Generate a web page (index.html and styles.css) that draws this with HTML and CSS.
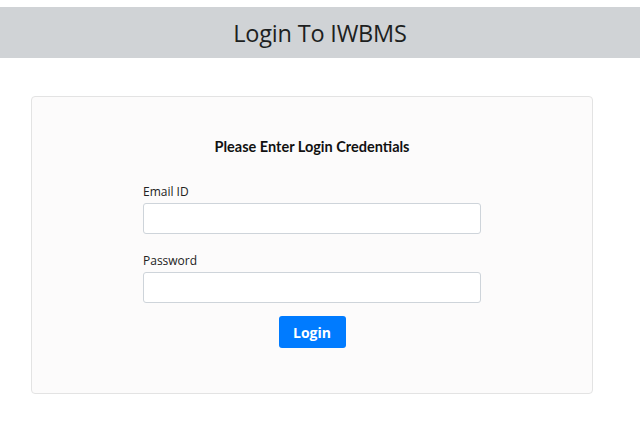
FILE: index.html
```html
<!DOCTYPE html>
<html lang="en">
<head>
    <meta charset="UTF-8">
    <meta name="viewport" content="width=device-width, initial-scale=1.0">
    <title>Login To IWBMS</title>
    <link rel="stylesheet" href="styles.css">
</head>
<body>
    <!-- Page Header -->
    <header class="page-header">
        <h1>Login To IWBMS</h1>
    </header>

    <!-- Login Card -->
    <div class="login-card">
        <h2>Please Enter Login Credentials</h2>
        <form class="login-form">
            <label for="email">Email ID</label>
            <input type="email" id="email">

            <label for="password">Password</label>
            <input type="password" id="password">

            <button type="button" class="btn">Login</button>
        </form>
    </div>
</body>
</html>
```

FILE: styles.css
```css
/* General Styles */
body {
    font-family: 'Open Sans', 'Noto Sans', sans-serif;
    margin: 0;
    padding: 7px 0 0;
    background: #fff;
    color: #212529;
}

/* Header Bar */
.page-header {
    background: #d0d3d6;
    height: 51px;
    display: flex;
    align-items: center;
    justify-content: center;
}

.page-header h1 {
    margin: 0;
    font-size: 23.5px;
    font-weight: 400;
    color: #1d1f21;
    letter-spacing: -0.2px;
}

/* Login Card */
.login-card {
    margin: 38px 0 0 31px;
    width: 560px;
    height: 296px;
    background: #fcfbfb;
    border: 1px solid #e3e3e3;
    border-radius: 4px;
}

.login-card h2 {
    margin: 41px 0 0;
    text-align: center;
    font-family: 'Lato', sans-serif;
    font-size: 14.5px;
    font-weight: 700;
    color: #111;
}

/* Form */
.login-form {
    width: 338px;
    margin: 28px auto 0;
    display: flex;
    flex-direction: column;
}

.login-form label {
    font-size: 12px;
    color: #222;
    margin-bottom: 3px;
}

.login-form input {
    height: 31px;
    box-sizing: border-box;
    border: 1px solid #ced4da;
    border-radius: 3px;
    background: #fff;
    margin-bottom: 18px;
}

.login-form input:last-of-type {
    margin-bottom: 13px;
}

/* Login Button */
.btn {
    align-self: center;
    width: 67px;
    height: 32px;
    background: #007bff;
    color: #fff;
    border: none;
    border-radius: 3px;
    font-family: inherit;
    font-size: 14px;
    font-weight: 700;
    cursor: pointer;
}
```
